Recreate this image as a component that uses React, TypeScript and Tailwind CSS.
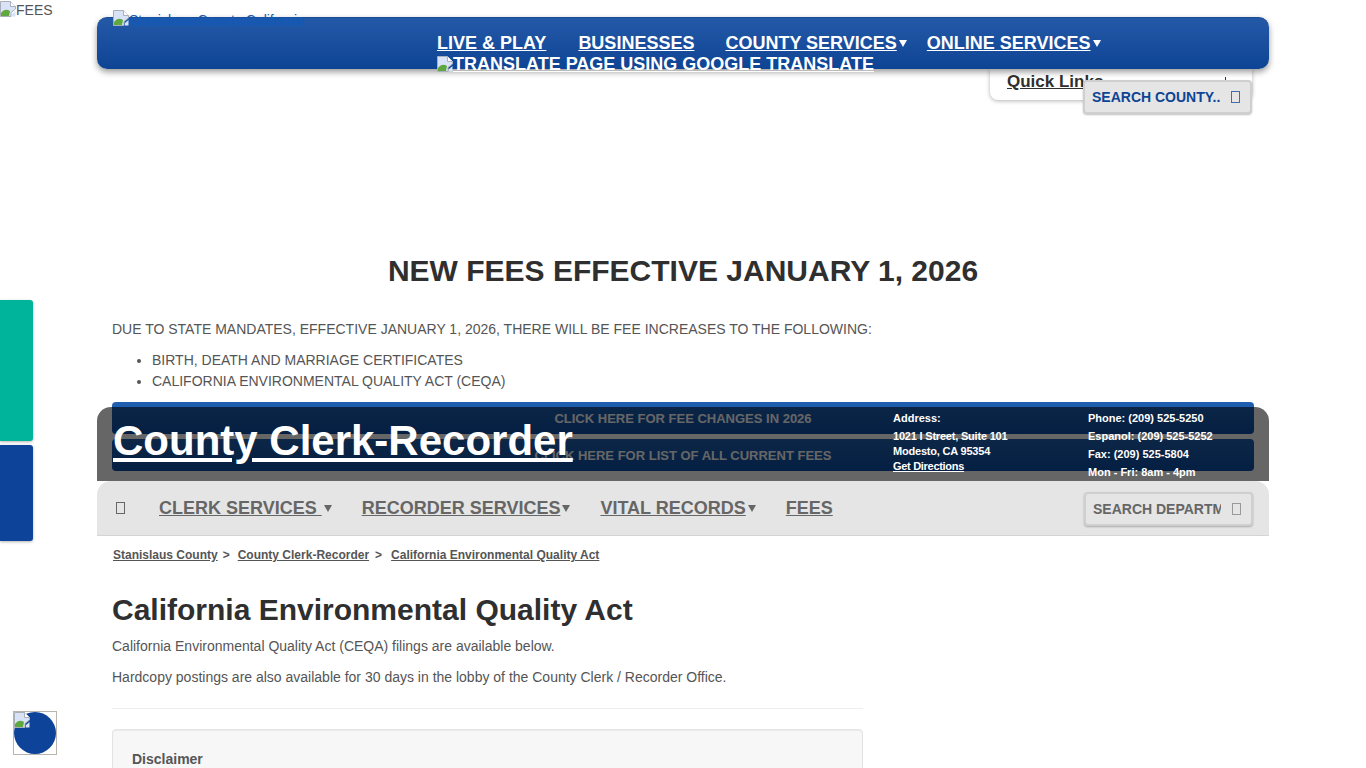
function BrokenImage({ className = "" }: { className?: string }) {
  return (
    <svg width="16" height="16" viewBox="0 0 16 16" className={`inline-block shrink-0 ${className}`}>
      <path d="M0.5 0.5H10.5L15.5 5.5V8L11 11.5V15.5H0.5Z" fill="#d8e3f8" stroke="#a9aeb8" />
      <path d="M1 15V12C4 8 7 8 10 10L9 15Z" fill="#5fa83f" />
      <path d="M10.5 0.5V5.5H15.5" fill="#fff" stroke="#a9aeb8" />
      <path d="M12 13L15.5 10V15.5H12Z" fill="#d8e3f8" />
    </svg>
  )
}

function Tofu({ className = "" }: { className?: string }) {
  return <span className={`inline-block h-[12px] w-[9px] shrink-0 border ${className}`} />
}

function Caret({ className = "" }: { className?: string }) {
  return (
    <svg width="8" height="7" viewBox="0 0 8 7" className={`shrink-0 fill-current ${className}`}>
      <path d="M0 0H8L4 7Z" />
    </svg>
  )
}

export default function App() {
  return (
    <div className="relative h-[768px] overflow-hidden bg-white font-['Liberation_Sans',Arial,sans-serif] text-[14px] text-[#555]">
      {/* broken images behind the county bar */}
      <a className="absolute left-0 top-0 flex h-[20px] items-start text-[14px] leading-[20px] text-[#555]">
        <BrokenImage className="mt-[1px]" />
        FEES
      </a>

      {/* county header */}
      <header className="relative mx-auto h-[240px] w-[1172px]">
        <div className="absolute right-[17px] top-[69px] h-[31px] w-[262px] rounded-b-[8px] bg-white pl-[17px] pt-[2px] shadow-[0_1px_4px_rgba(0,0,0,0.3)]">
          <a className="text-[17px] font-bold leading-[22px] text-[#2f2f2f] underline">Quick Links</a>
          <span className="absolute left-[235px] top-[8px] h-[4px] w-[1px] bg-[#2f2f2f]" />
        </div>

        <div className="absolute left-0 right-0 top-[17px] h-[52px] rounded-[10px] border-t border-[#1a4d96] bg-gradient-to-b from-[#2459a8] to-[#0d4494] pl-[340px] pt-[15px] font-bold text-white shadow-[0_3px_6px_rgba(0,0,0,0.4)]">
          <span className="absolute left-[16px] top-0 h-[8px] w-[190px] bg-[#1a58b0]" />
          <nav className="flex h-[21px] items-center text-[18px] leading-[21px]">
            <a className="underline">LIVE &amp; PLAY</a>
            <a className="ml-[32px] underline">BUSINESSES</a>
            <a className="ml-[31px] underline">COUNTY SERVICES</a>
            <Caret className="ml-[2px]" />
            <a className="ml-[20px] underline">ONLINE SERVICES</a>
            <Caret className="ml-[2px]" />
          </nav>
          <a className="flex h-[20px] items-center text-[18px] leading-[20px] underline">
            <BrokenImage />
            TRANSLATE PAGE USING GOOGLE TRANSLATE
          </a>
        </div>

        <a className="absolute left-[16px] top-[10px] flex items-start text-[14px] leading-[16px] text-[#1558b0]">
          <BrokenImage />
          <span className="mt-[2px]">Stanislaus County California</span>
        </a>

        <div className="absolute left-[986px] top-[80px] flex h-[34px] w-[169px] items-center justify-between rounded-[4px] border-2 border-[#cfcfcf] bg-[#e5e5e5] pl-[7px] pr-[10px] shadow-[0_1px_2px_rgba(0,0,0,0.25)]">
          <input
            readOnly
            placeholder="SEARCH COUNTY.."
            className="w-[130px] bg-transparent text-[14px] font-bold outline-none placeholder:text-[#0d4494]"
          />
          <Tofu className="border-[#3f6fb0]" />
        </div>
      </header>

      {/* notice */}
      <main className="mx-auto w-[1172px] px-[15px]">
        <h2 className="mt-[14px] text-center text-[30px] font-bold leading-[34px] text-[#2f2f2f]">
          NEW FEES EFFECTIVE JANUARY 1, 2026
        </h2>
        <p className="mt-[31px] leading-[20px]">
          DUE TO STATE MANDATES, EFFECTIVE JANUARY 1, 2026, THERE WILL BE FEE INCREASES TO THE FOLLOWING:
        </p>
        <ul className="mt-[11px] list-disc pl-[40px] leading-[21px]">
          <li>BIRTH, DEATH AND MARRIAGE CERTIFICATES</li>
          <li>CALIFORNIA ENVIRONMENTAL QUALITY ACT (CEQA)</li>
        </ul>
        <div className="mt-[10px] flex flex-col gap-[5px]">
          <a className="flex h-[32px] items-center justify-center rounded-[4px] bg-gradient-to-b from-[#2160b0] to-[#0b4fa8] pt-[1px] text-[13px] font-bold text-white">
            CLICK HERE FOR FEE CHANGES IN 2026
          </a>
          <a className="flex h-[32px] items-center justify-center rounded-[4px] bg-gradient-to-b from-[#2160b0] to-[#0b4fa8] pt-[1px] text-[13px] font-bold text-white">
            CLICK HERE FOR LIST OF ALL CURRENT FEES
          </a>
        </div>

        {/* department header sits over the notice */}
        <section className="relative -mx-[15px] -mt-[64px]">
          <div className="flex h-[74px] justify-between rounded-t-[14px] bg-black/60 pl-[16px] text-white">
            <a className="mt-[10px] text-[42px] font-bold leading-[48px] underline">County Clerk-Recorder</a>
            <div className="flex text-[11px] font-bold">
              <div className="w-[195px]">
                <p className="mt-[4px] leading-[14px]">Address:</p>
                <p className="mt-[4px] leading-[15px] tracking-[-0.2px]">1021 I Street, Suite 101</p>
                <p className="leading-[15px] tracking-[-0.2px]">Modesto, CA 95354</p>
                <a className="block leading-[15px] tracking-[-0.3px] underline">Get Directions</a>
              </div>
              <div className="w-[181px] leading-[18px]">
                <p className="mt-[2px]">Phone: (209) 525-5250</p>
                <p>Espanol: (209) 525-5252</p>
                <p>Fax: (209) 525-5804</p>
                <p>Mon - Fri: 8am - 4pm</p>
              </div>
            </div>
          </div>
          <nav className="flex h-[55px] items-center rounded-t-[14px] border-b border-[#d5d5d5] bg-[#e5e5e5] pl-[19px] pr-[16px] text-[18px] font-bold text-[#666]">
            <Tofu className="border-[#666]" />
            <a className="ml-[34px] underline">CLERK SERVICES&nbsp;</a>
            <Caret className="ml-[2px]" />
            <a className="ml-[30px] underline">RECORDER SERVICES</a>
            <Caret className="ml-[2px]" />
            <a className="ml-[30px] underline">VITAL RECORDS</a>
            <Caret className="ml-[2px]" />
            <a className="ml-[30px] underline">FEES</a>
            <div className="ml-auto mt-[2px] flex h-[34px] w-[169px] items-center justify-between rounded-[4px] border-2 border-[#cfcfcf] bg-[#e5e5e5] pl-[7px] pr-[10px] shadow-[0_1px_2px_rgba(0,0,0,0.25)]">
              <input
                readOnly
                placeholder="SEARCH DEPARTMENT"
                className="w-[128px] bg-transparent text-[14px] font-bold outline-none placeholder:text-[#666]"
              />
              <Tofu className="border-[#999]" />
            </div>
          </nav>
        </section>

        {/* page content */}
        <nav className="mt-[12px] flex pl-[1px] text-[12px] font-bold leading-[14px]">
          <a className="underline">Stanislaus County</a>
          <span className="ml-[5px]">&gt;</span>
          <a className="ml-[8px] underline">County Clerk-Recorder</a>
          <span className="ml-[6px]">&gt;</span>
          <a className="ml-[9px] underline">California Environmental Quality Act</a>
        </nav>
        <div className="w-[751px]">
          <h1 className="mt-[30px] text-[30px] font-bold leading-[36px] text-[#2f2f2f]">California Environmental Quality Act</h1>
          <p className="mt-[8px] leading-[20px]">California Environmental Quality Act (CEQA) filings are available below.</p>
          <p className="mt-[11px] leading-[20px]">Hardcopy postings are also available for 30 days in the lobby of the County Clerk / Recorder Office.</p>
          <hr className="mt-[21px] border-[#eee]" />
          <div className="mt-[20px] h-[60px] rounded-[4px] border border-[#e3e3e3] bg-[#f7f7f7] px-[19px] pt-[21px] shadow-[inset_0_1px_1px_rgba(0,0,0,0.05)]">
            <h3 className="font-bold leading-[16px]">Disclaimer</h3>
          </div>
        </div>
      </main>

      {/* fixed side tabs */}
      <div className="absolute left-0 top-[300px] flex w-[33px] flex-col gap-[4px]">
        <a className="h-[141px] rounded-r-[3px] bg-[#00b39b] shadow-[0_1px_3px_rgba(0,0,0,0.3)]" />
        <a className="h-[96px] rounded-r-[3px] bg-[#0d4499] shadow-[0_1px_3px_rgba(0,0,0,0.3)]" />
      </div>

      {/* accessibility button */}
      <div className="absolute left-[13px] top-[711px] h-[44px] w-[44px] border border-[#b9b4ad]">
        <div className="h-full w-full rounded-full bg-[#0d4499]" />
        <BrokenImage className="absolute left-0 top-0" />
      </div>
    </div>
  )
}
